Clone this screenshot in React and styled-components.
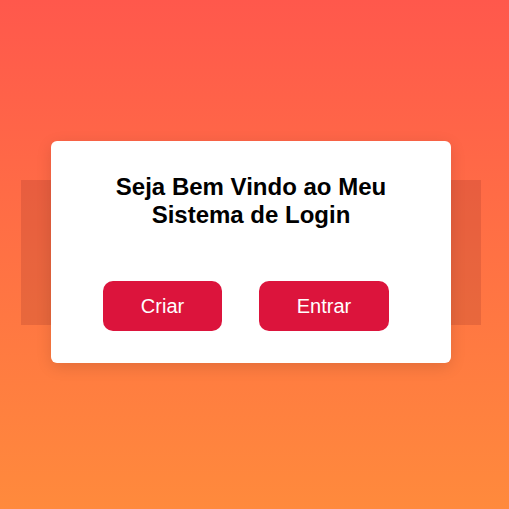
import React from "react"
import styled, { createGlobalStyle } from "styled-components"

const GlobalStyle = createGlobalStyle`
	html, body {
		margin: 0;
		padding: 0;
	}
	body {
		font-family: "Liberation Sans", Arial, sans-serif;
	}
`

const Page = styled.div`
	min-height: 100vh;
	display: flex;
	align-items: center;
	justify-content: center;
	background: linear-gradient(180deg, #ff584c 0%, #ff8a3c 100%);
	padding: 0 7px 5px 0;
	box-sizing: border-box;
`

const Stack = styled.div`
	display: grid;
	place-items: center;
`

const Backdrop = styled.div`
	grid-area: 1 / 1;
	width: 460px;
	height: 145px;
	background: rgba(150, 50, 40, 0.22);
`

const Card = styled.div`
	grid-area: 1 / 1;
	width: 400px;
	height: 222px;
	box-sizing: border-box;
	background: #fff;
	border-radius: 6px;
	box-shadow: 0 4px 16px rgba(0, 0, 0, 0.12);
	display: flex;
	flex-direction: column;
	align-items: center;
	padding-top: 32px;
`

const Title = styled.h1`
	margin: 0;
	font-size: 24px;
	line-height: 28px;
	font-weight: 700;
	color: #000;
	text-align: center;
	width: 320px;
`

const Actions = styled.div`
	display: flex;
	gap: 37px;
	margin-top: 52px;
	margin-left: -10px;
`

const Button = styled.button`
	width: ${p => p.$w}px;
	height: 50px;
	border: none;
	border-radius: 10px;
	background: #dc143c;
	color: #fff;
	font-family: "Liberation Sans", Arial, sans-serif;
	font-size: 20px;
	cursor: pointer;
`

export default function App() {
	return (
		<>
			<GlobalStyle />
			<Page>
				<Stack>
					<Backdrop />
					<Card>
						<Title>Seja Bem Vindo ao Meu Sistema de Login</Title>
						<Actions>
							<Button $w={119}>Criar</Button>
							<Button $w={130}>Entrar</Button>
						</Actions>
					</Card>
				</Stack>
			</Page>
		</>
	)
}
